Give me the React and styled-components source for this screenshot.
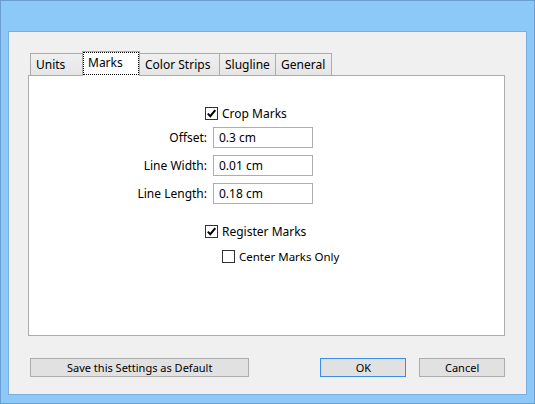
import React from 'react';
import styled, { createGlobalStyle } from 'styled-components';

const GlobalStyle = createGlobalStyle`
  html, body {
    margin: 0;
    padding: 0;
    background: #88c5f7;
  }
  * {
    box-sizing: border-box;
  }
`;

const Window = styled.div`
  width: 535px;
  height: 404px;
  padding: 30px 7px 8px 7px;
  background: #8cc8f8;
  border: 1px solid #6b9fd2;
  font-family: "Noto Sans", "Open Sans", sans-serif;
  font-size: 12px;
  color: #000;
`;

const Client = styled.div`
  width: 100%;
  height: 100%;
  background: #f0f0f0;
  border: 1px solid #7aaede;
  display: flex;
  flex-direction: column;
  padding: 19px 21px 0 19px;
`;

const TabStrip = styled.div`
  display: flex;
  align-items: flex-end;
  height: 24px;
  padding-left: 2px;
`;

const Tab = styled.div`
  position: relative;
  width: ${(p) => p.$w}px;
  height: ${(p) => (p.$active ? 25 : 22)}px;
  margin-left: ${(p) => (p.$first ? 0 : -1)}px;
  margin-bottom: ${(p) => (p.$active ? -1 : 0)}px;
  z-index: ${(p) => (p.$active ? 1 : 0)};
  display: flex;
  align-items: center;
  padding: 0 0 ${(p) => (p.$active ? 3 : 0)}px 5px;
  border: 1px solid #acacac;
  border-bottom: none;
  background: ${(p) => (p.$active ? '#fff' : 'linear-gradient(#f0f0f0, #e5e5e5)')};
  outline: ${(p) => (p.$active ? '1px dotted #000' : 'none')};
  outline-offset: -2px;
  font-size: 12px;
  white-space: nowrap;
`;

const Panel = styled.div`
  width: 477px;
  height: 261px;
  background: #fff;
  border: 1px solid #acacac;
  display: flex;
  flex-direction: column;
  padding-top: 28px;
`;

const CheckRow = styled.label`
  display: flex;
  align-items: center;
  height: 18px;
  gap: 4px;
  padding-left: ${(p) => p.$indent}px;
  margin-top: ${(p) => p.$top || 0}px;
  font-size: ${(p) => p.$size || 12}px;
`;

const Box = styled.span`
  width: 13px;
  height: 13px;
  border: 1px solid #333;
  background: #fff;
  display: flex;
  align-items: center;
  justify-content: center;
`;

const FieldRow = styled.div`
  display: grid;
  grid-template-columns: 178px 100px;
  column-gap: 6px;
  align-items: center;
  margin-top: ${(p) => p.$top}px;
`;

const FieldLabel = styled.span`
  text-align: right;
  font-size: 12px;
`;

const Input = styled.input`
  width: 100px;
  height: 21px;
  border: 1px solid #abadb3;
  padding: 0 5px;
  font-family: inherit;
  font-size: 12px;
  color: #000;
  background: #fff;
  outline: none;
`;

const ButtonRow = styled.div`
  display: flex;
  align-items: center;
  margin-top: 22px;
  padding-left: 2px;
`;

const Button = styled.button`
  width: ${(p) => p.$w}px;
  height: 19px;
  margin-left: ${(p) => p.$gap || 0}px;
  border: 1px solid ${(p) => (p.$default ? '#3a8ee6' : '#adadad')};
  background: #e1e1e1;
  font-family: inherit;
  font-size: 11px;
  color: #000;
  padding: 0;
`;

const Checkbox = ({ checked }) => (
  <Box>
    {checked && (
      <svg width="11" height="11" viewBox="0 0 11 11">
        <path d="M1.8 5.6 L4.3 8.2 L9.3 2.2" fill="none" stroke="#000" strokeWidth="2" />
      </svg>
    )}
  </Box>
);

const tabs = [
  { label: 'Units', w: 53 },
  { label: 'Marks', w: 58, active: true },
  { label: 'Color Strips', w: 81 },
  { label: 'Slugline', w: 57 },
  { label: 'General', w: 57 },
];

const fields = [
  { label: 'Offset:', value: '0.3 cm', top: 5 },
  { label: 'Line Width:', value: '0.01 cm', top: 7 },
  { label: 'Line Length:', value: '0.18 cm', top: 7 },
];

export default function App() {
  return (
    <>
      <GlobalStyle />
      <Window>
        <Client>
          <TabStrip>
            {tabs.map((t, i) => (
              <Tab key={t.label} $w={t.w} $active={t.active} $first={i === 0}>
                {t.label}
              </Tab>
            ))}
          </TabStrip>
          <Panel>
            <CheckRow $indent={176}>
              <Checkbox checked />
              Crop Marks
            </CheckRow>
            {fields.map((f) => (
              <FieldRow key={f.label} $top={f.top}>
                <FieldLabel>{f.label}</FieldLabel>
                <Input readOnly value={f.value} />
              </FieldRow>
            ))}
            <CheckRow $indent={176} $top={18}>
              <Checkbox checked />
              Register Marks
            </CheckRow>
            <CheckRow $indent={193} $top={7} $size={11.5}>
              <Checkbox />
              Center Marks Only
            </CheckRow>
          </Panel>
          <ButtonRow>
            <Button $w={220}>Save this Settings as Default</Button>
            <Button $w={86} $gap={71} $default>OK</Button>
            <Button $w={86} $gap={13}>Cancel</Button>
          </ButtonRow>
        </Client>
      </Window>
    </>
  );
}
